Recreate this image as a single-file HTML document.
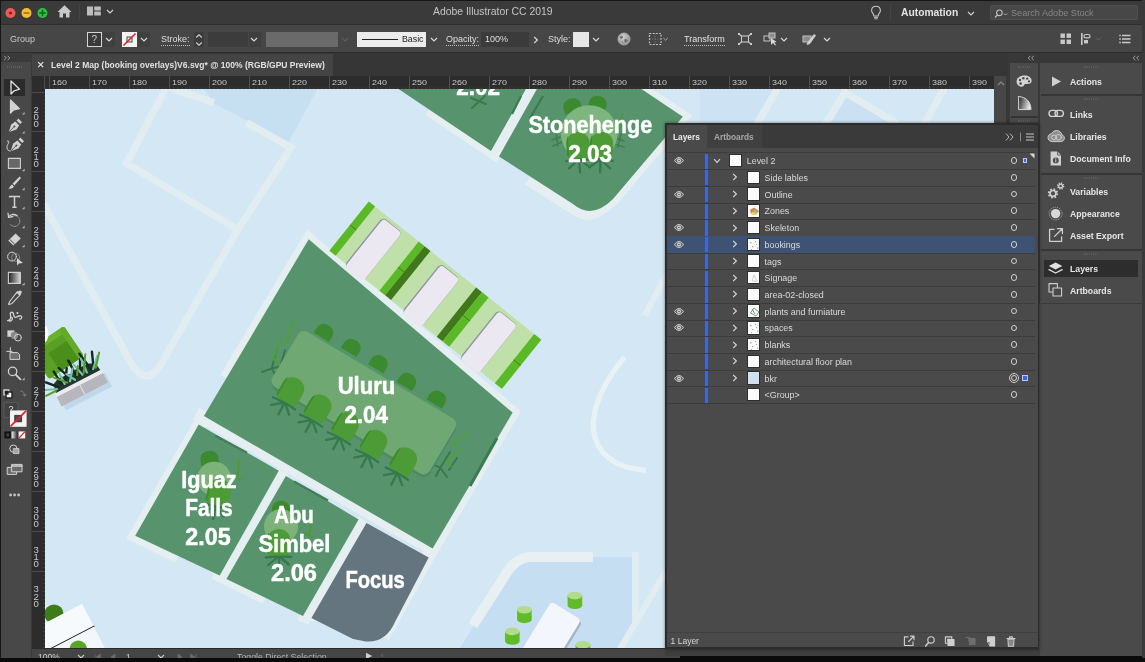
<!DOCTYPE html>
<html lang="en">
<head>
<meta charset="utf-8">
<title>Adobe Illustrator CC 2019</title>
<style>
*{box-sizing:border-box;margin:0;padding:0}
html,body{width:1145px;height:662px;overflow:hidden;background:#000}
body{position:relative;font-family:"Liberation Sans",sans-serif;font-size:9px;color:#dcdcdc;-webkit-font-smoothing:antialiased}
.abs{position:absolute}
#app{position:absolute;left:0;top:0;width:1145px;height:662px;overflow:hidden;background:#4a4a4a;will-change:transform}
#titlebar{left:0;top:0;width:1145px;height:25px;background:#3a3a3a;border-bottom:1px solid #2e2e2e;box-shadow:inset 0 1px 0 #161616}
#ctrlbar{left:0;top:25px;width:1145px;height:28px;background:#464646;border-bottom:1px solid #2c2c2c}
#tabstrip{left:32px;top:53px;width:976px;height:23px;background:#363636}
#tab{left:0;top:1px;width:301px;height:22px;background:#444444}
#toolbar{left:0;top:53px;width:32px;height:605px;background:#484848;border-right:1px solid #3a3a3a}
#toolhead{left:0;top:53px;width:32px;height:9px;background:#3a3a3a}
#hruler{left:32px;top:76px;width:962px;height:13px;background:#2c2c2c}
#vruler{left:32px;top:89px;width:13px;height:559px;background:#2c2c2c}
#canvas{left:45px;top:89px;width:949px;height:559px;background:#d3e7f4;overflow:hidden}
#vscroll{left:994px;top:76px;width:14px;height:572px;background:#474747;border-right:2px solid #383838}
#statusbar{left:32px;top:648px;width:976px;height:10px;background:#454545}
#bottomblack{left:0;top:658px;width:1145px;height:4px;background:#0a0a0a}
#dockbg{left:1008px;top:53px;width:137px;height:605px;background:#383838}
#dockicons{left:1010px;top:63px;width:28px;height:62px;background:#4a4a4a}
#dockwide{left:1040.4px;top:63px;width:104.6px;height:595px;background:#4a4a4a}
#dockfill{left:1008px;top:304px;width:137px;height:354px;background:#4a4a4a}
.t{position:absolute;white-space:nowrap;line-height:1}
.b{font-weight:bold}
svg{position:absolute;overflow:visible}
.rl{position:absolute;top:0;height:13px;font-size:8px;color:#c8c8c8;line-height:13px;padding-left:2.2px;border-left:1px solid #4e4e4e}
.rl b{display:inline-block;font-weight:normal;transform:scaleX(1.12);transform-origin:0 50%}
.vl{position:absolute;left:0;width:13px;border-top:1px solid #4e4e4e;font-size:8.3px;color:#c8c8c8;line-height:7.2px;text-align:center;padding-top:14.5px;padding-right:4.6px}
.vl i{display:block;font-style:normal;transform:scaleX(1.15)}
</style>
</head>
<body>
<div id="app">
<!-- TITLE BAR -->
<div id="titlebar" class="abs">
  <svg width="60" height="25" style="left:0;top:-0.3px">
    <circle cx="10.5" cy="13" r="5" fill="#ee5b55"/><circle cx="10.5" cy="13" r="1.6" fill="#8c1a14"/>
    <circle cx="26.5" cy="13" r="5" fill="#f5bd30"/><rect x="23.5" y="12.3" width="6" height="1.4" fill="#98660a"/>
    <circle cx="42.5" cy="13" r="5" fill="#2bc33f"/><rect x="39.3" y="12.3" width="6.4" height="1.4" fill="#0a6317"/><rect x="41.8" y="9.8" width="1.4" height="6.4" fill="#0a6317"/>
  </svg>
  <svg width="20" height="16" style="left:56px;top:4.4px" viewBox="0 0 20 16">
    <path d="M8.5 1.2 L1.5 8 L3.5 8 L3.5 13.6 L7 13.6 L7 9.6 L10 9.6 L10 13.6 L13.5 13.6 L13.5 8 L15.5 8 Z" fill="#c9c9c9"/>
  </svg>
  <div class="abs" style="left:79px;top:5px;width:1px;height:15px;background:#444"></div>
  <svg width="16" height="12" style="left:87px;top:6px" viewBox="0 0 16 12">
    <rect x="0" y="0.5" width="6" height="9" fill="#bdbdbd"/><rect x="7.2" y="0.5" width="6.6" height="4" fill="#bdbdbd"/><rect x="7.2" y="5.5" width="6.6" height="4" fill="#bdbdbd"/>
  </svg>
  <svg width="8" height="6" style="left:106px;top:9px" viewBox="0 0 8 6"><path d="M1 1 L4 4 L7 1" fill="none" stroke="#d0d0d0" stroke-width="1.2"/></svg>
  <div class="t" style="left:433px;top:7px;font-size:10.4px;color:#c4c4c4">Adobe Illustrator CC 2019</div>
  <!-- lightbulb -->
  <svg width="12" height="16" style="left:870px;top:4.8px" viewBox="0 0 12 16">
    <path d="M6 1.2 C3.2 1.2 1.6 3.2 1.6 5.4 C1.6 7.2 2.8 8.2 3.6 9.4 L3.8 11 L8.2 11 L8.4 9.4 C9.2 8.2 10.4 7.2 10.4 5.4 C10.4 3.2 8.8 1.2 6 1.2 Z" fill="none" stroke="#c4c4c4" stroke-width="1.1"/>
    <path d="M4 12.4 H8 M4.4 13.8 H7.6" stroke="#c4c4c4" stroke-width="1"/>
  </svg>
  <div class="abs" style="left:890px;top:4px;width:1px;height:17px;background:#444"></div>
  <div class="t b" style="left:901px;top:7.8px;font-size:10.3px;color:#e2e2e2">Automation</div>
  <svg width="8" height="6" style="left:967px;top:10.6px" viewBox="0 0 8 6"><path d="M1 1 L4 4 L7 1" fill="none" stroke="#d0d0d0" stroke-width="1.2"/></svg>
  <div class="abs" style="left:990.4px;top:5px;width:147.6px;height:15px;background:#474747;border:1px solid #505050;border-radius:2px"></div>
  <svg width="14" height="10" style="left:994px;top:8.6px" viewBox="0 0 14 10">
    <circle cx="5.4" cy="3.8" r="2.8" fill="none" stroke="#c0c0c0" stroke-width="1.1"/><path d="M3.3 6 L1 8.6" stroke="#c0c0c0" stroke-width="1.2"/><path d="M10 4.5 L11.5 6 L13 4.5" fill="none" stroke="#c0c0c0" stroke-width="0.9"/>
  </svg>
  <div class="t" style="left:1011px;top:8.8px;font-size:9.15px;color:#858585">Search Adobe Stock</div>
</div>

<!-- CONTROL BAR -->
<div id="ctrlbar" class="abs">
  <div class="abs" style="left:103px;top:7px;width:12px;height:15px;background:#404040"></div><div class="abs" style="left:138px;top:7px;width:12px;height:15px;background:#404040"></div>
  <div class="t" style="left:10px;top:10px;font-size:9px;color:#c9c9c9">Group</div>
  <div class="abs" style="left:87px;top:7px;width:15px;height:15px;border:1.5px solid #d6d6d6;background:#3a3a3a"></div>
  <div class="t" style="left:91.5px;top:9.5px;font-size:10px;color:#c9c9c9">?</div>
  <svg width="8" height="6" style="left:105px;top:12px" viewBox="0 0 8 6"><path d="M1 1 L4 4 L7 1" fill="none" stroke="#d8d8d8" stroke-width="1.2"/></svg>
  <div class="abs" style="left:122px;top:7px;width:15px;height:15px;background:#f4f4f4"></div>
  <svg width="15" height="15" style="left:122px;top:7px" viewBox="0 0 15 15"><rect x="5" y="5" width="5" height="5" fill="none" stroke="#444" stroke-width="1"/><path d="M1.5 13.5 L13.5 1.5" stroke="#e8202a" stroke-width="1.6"/></svg>
  <svg width="8" height="6" style="left:140px;top:12px" viewBox="0 0 8 6"><path d="M1 1 L4 4 L7 1" fill="none" stroke="#d8d8d8" stroke-width="1.2"/></svg>
  <div class="t" style="left:161px;top:10px;font-size:9px;color:#dedede;border-bottom:1px dotted #bdbdbd;padding-bottom:1px">Stroke:</div>
  <div class="abs" style="left:193.5px;top:7px;width:10.5px;height:15px;background:#3c3c3c"></div><div class="abs" style="left:208px;top:7px;width:39.5px;height:15px;background:#3c3c3c"></div><div class="abs" style="left:248.5px;top:7px;width:12.5px;height:15px;background:#3f3f3f"></div>
  <svg width="8" height="14" style="left:194.8px;top:7.6px" viewBox="0 0 8 14"><path d="M1.2 4.5 L4 1.8 L6.8 4.5 M1.2 9.5 L4 12.2 L6.8 9.5" fill="none" stroke="#d0d0d0" stroke-width="1.1"/></svg>
  <svg width="8" height="6" style="left:250px;top:12px" viewBox="0 0 8 6"><path d="M1 1 L4 4 L7 1" fill="none" stroke="#d8d8d8" stroke-width="1.2"/></svg>
  <div class="abs" style="left:266px;top:7px;width:72px;height:15px;background:#6a6a6a"></div>
  <svg width="8" height="6" style="left:341px;top:12px" viewBox="0 0 8 6"><path d="M1 1 L4 4 L7 1" fill="none" stroke="#5c5c5c" stroke-width="1.2"/></svg>
  <div class="abs" style="left:357px;top:7px;width:69px;height:15px;background:#ececec"></div>
  <div class="abs" style="left:362px;top:14px;width:36px;height:1.4px;background:#222"></div>
  <div class="t" style="left:402px;top:10px;font-size:8.8px;color:#222">Basic</div>
  <svg width="8" height="6" style="left:430px;top:12px" viewBox="0 0 8 6"><path d="M1 1 L4 4 L7 1" fill="none" stroke="#d8d8d8" stroke-width="1.2"/></svg>
  <div class="t" style="left:446px;top:10px;font-size:9px;color:#dedede;border-bottom:1px dotted #bdbdbd;padding-bottom:1px">Opacity:</div>
  <div class="abs" style="left:481px;top:7px;width:48px;height:15px;background:#3b3b3b"></div>
  <div class="t" style="left:485px;top:10px;font-size:9px;color:#dedede">100%</div>
  <svg width="6" height="8" style="left:533px;top:11px" viewBox="0 0 6 8"><path d="M1.2 1 L4.4 4 L1.2 7" fill="none" stroke="#d8d8d8" stroke-width="1.2"/></svg>
  <div class="t" style="left:548px;top:10px;font-size:9px;color:#dedede">Style:</div>
  <div class="abs" style="left:573px;top:7px;width:16px;height:15px;background:#e6e6e6"></div>
  <svg width="8" height="6" style="left:592px;top:12px" viewBox="0 0 8 6"><path d="M1 1 L4 4 L7 1" fill="none" stroke="#d8d8d8" stroke-width="1.2"/></svg>
  <!-- globe -->
  <svg width="14" height="14" style="left:617px;top:7px" viewBox="0 0 14 14">
    <defs><radialGradient id="gl" cx="0.4" cy="0.35" r="0.7"><stop offset="0" stop-color="#d6d6d6"/><stop offset="1" stop-color="#8a8a8a"/></radialGradient></defs><circle cx="7" cy="7" r="6" fill="url(#gl)" stroke="#b8b8b8" stroke-width="0.8"/><path d="M3 4.4 Q5 3.4 6 5 Q5.4 7 3.6 6.4 Z M7.6 7.4 Q10 6.6 10.6 8.6 Q9.4 10.6 7.6 9.8 Z M5 9 L6 10.6" fill="#6e6e6e" stroke="#6e6e6e" stroke-width="0.5"/>
  </svg>
  <!-- align dotted -->
  <svg width="22" height="14" style="left:648px;top:7px" viewBox="0 0 22 14">
    <rect x="1.5" y="1.5" width="11.5" height="11" fill="none" stroke="#c4c4c4" stroke-width="1.2" stroke-dasharray="1.8 1.4"/><path d="M7.2 1.5 V12.5 M1.5 7 H13" stroke="#9a9a9a" stroke-width="0.7" stroke-dasharray="1 1.6"/><path d="M15.4 6 L17.6 8.2 L19.8 6" fill="none" stroke="#aaa" stroke-width="1"/>
  </svg>
  <div class="t" style="left:684px;top:10px;font-size:9px;color:#e2e2e2;border-bottom:1px dotted #bdbdbd;padding-bottom:1px">Transform</div>
  <svg width="14" height="12" style="left:738px;top:8px" viewBox="0 0 14 12">
    <rect x="3.5" y="3" width="7" height="6" fill="none" stroke="#c9c9c9" stroke-width="1.1"/><path d="M1 1 L3.5 3 M13 1 L10.5 3 M1 11 L3.5 9 M13 11 L10.5 9" stroke="#c9c9c9" stroke-width="1.2"/><rect x="0" y="0" width="2" height="2" fill="#c9c9c9"/><rect x="12" y="0" width="2" height="2" fill="#c9c9c9"/><rect x="0" y="10" width="2" height="2" fill="#c9c9c9"/><rect x="12" y="10" width="2" height="2" fill="#c9c9c9"/>
  </svg>
  <svg width="16" height="14" style="left:763px;top:7px" viewBox="0 0 16 14">
    <rect x="1" y="4" width="6" height="5" fill="none" stroke="#c4c4c4" stroke-width="1"/><rect x="6" y="1" width="6" height="5" fill="#8a8a8a" stroke="#c4c4c4" stroke-width="1"/><path d="M8 6 L8 13 L10 11 L12 13.5 L13 12.8 L11.2 10.4 L13.6 10 Z" fill="#d8d8d8"/>
  </svg>
  <svg width="8" height="6" style="left:780px;top:12px" viewBox="0 0 8 6"><path d="M1 1 L4 4 L7 1" fill="none" stroke="#d8d8d8" stroke-width="1.2"/></svg>
  <svg width="16" height="14" style="left:802px;top:7px" viewBox="0 0 16 14">
    <rect x="1" y="4" width="8" height="6" fill="#8a8a8a" stroke="#c4c4c4" stroke-width="1"/><path d="M5 11 L12 2 L14 3.6 L7.5 12.2 L4.6 13 Z" fill="#d0d0d0"/>
  </svg>
  <svg width="8" height="6" style="left:823px;top:12px" viewBox="0 0 8 6"><path d="M1 1 L4 4 L7 1" fill="none" stroke="#d8d8d8" stroke-width="1.2"/></svg>
  <!-- right icons -->
  <svg width="12" height="12" style="left:1060px;top:8px" viewBox="0 0 12 12"><rect x="0.5" y="0.5" width="4.4" height="4.4" fill="#c9c9c9"/><rect x="6.6" y="0.5" width="4.4" height="4.4" fill="#c9c9c9"/><rect x="0.5" y="6.6" width="4.4" height="4.4" fill="#c9c9c9"/><rect x="6.6" y="6.6" width="4.4" height="4.4" fill="#c9c9c9"/></svg>
  <svg width="24" height="12" style="left:1080px;top:8px" viewBox="0 0 24 12"><rect x="1" y="0" width="1.6" height="12" fill="#c9c9c9"/><rect x="4" y="1.5" width="6" height="3.4" fill="none" stroke="#c9c9c9" stroke-width="1.2" rx="1.7"/><rect x="4" y="7" width="4" height="3.4" fill="#c9c9c9"/><path d="M16 4.5 L18.5 7 L21 4.5" fill="none" stroke="#666" stroke-width="1"/></svg>
  <svg width="12" height="10" style="left:1119px;top:9px" viewBox="0 0 12 10"><path d="M3 1.5 H11.5 M3 5 H11.5 M3 8.5 H11.5" stroke="#c9c9c9" stroke-width="1.3"/><path d="M0.3 1.5 H1.8 M0.3 5 H1.8 M0.3 8.5 H1.8" stroke="#c9c9c9" stroke-width="1.3"/></svg>
</div>

<!-- TAB STRIP -->
<div id="tabstrip" class="abs">
  <div id="tab" class="abs">
    <svg width="8" height="8" style="left:5px;top:7px" viewBox="0 0 8 8"><path d="M1.2 1.2 L6.2 6.2 M6.2 1.2 L1.2 6.2" stroke="#e8e8e8" stroke-width="1.2"/></svg>
    <div class="t b" style="left:19px;top:6.5px;font-size:8.5px;color:#e0e0e0">Level 2 Map (booking overlays)V6.svg* @ 100% (RGB/GPU Preview)</div>
  </div>
</div>
<!-- TOOLBAR -->
<div id="toolbar" class="abs"></div><div id="toolhead" class="abs"></div>
<svg width="8" height="6" style="left:3px;top:55.4px" viewBox="0 0 8 6"><path d="M1.2 0.8 L3.4 3 L1.2 5.2 M4.6 0.8 L6.8 3 L4.6 5.2" fill="none" stroke="#b0b0b0" stroke-width="0.9"/></svg>
<div class="abs" style="left:7px;top:65.6px;width:15px;height:2px;border-top:1px dotted #5e5e5e;border-bottom:1px dotted #5e5e5e"></div>
<div class="abs" style="left:0;top:0;width:1.2px;height:658px;background:#161616;z-index:5"></div>
<div id="hruler" class="abs">
<div class="abs" style="left:0;top:0;width:13px;height:13px;background:#2c2c2c;border-right:1px solid #4a4a4a"></div>
<div class="rl" style="left:17.3px"><b>160</b></div>
<div class="rl" style="left:57.3px"><b>170</b></div>
<div class="rl" style="left:97.3px"><b>180</b></div>
<div class="rl" style="left:137.3px"><b>190</b></div>
<div class="rl" style="left:177.3px"><b>200</b></div>
<div class="rl" style="left:217.3px"><b>210</b></div>
<div class="rl" style="left:257.3px"><b>220</b></div>
<div class="rl" style="left:297.3px"><b>230</b></div>
<div class="rl" style="left:337.3px"><b>240</b></div>
<div class="rl" style="left:377.3px"><b>250</b></div>
<div class="rl" style="left:417.3px"><b>260</b></div>
<div class="rl" style="left:457.3px"><b>270</b></div>
<div class="rl" style="left:497.3px"><b>280</b></div>
<div class="rl" style="left:537.3px"><b>290</b></div>
<div class="rl" style="left:577.3px"><b>300</b></div>
<div class="rl" style="left:617.3px"><b>310</b></div>
<div class="rl" style="left:657.3px"><b>320</b></div>
<div class="rl" style="left:697.3px"><b>330</b></div>
<div class="rl" style="left:737.3px"><b>340</b></div>
<div class="rl" style="left:777.3px"><b>350</b></div>
<div class="rl" style="left:817.3px"><b>360</b></div>
<div class="rl" style="left:857.3px"><b>370</b></div>
<div class="rl" style="left:897.3px"><b>380</b></div>
<div class="rl" style="left:937.3px"><b>390</b></div>
<svg width="962" height="13" style="left:0;top:0"><path d="M13.8 11.4 V13 M21.8 11.4 V13 M25.8 11.4 V13 M29.8 11.4 V13 M33.8 11.4 V13 M37.8 10.4 V13 M41.8 11.4 V13 M45.8 11.4 V13 M49.8 11.4 V13 M53.8 11.4 V13 M61.8 11.4 V13 M65.8 11.4 V13 M69.8 11.4 V13 M73.8 11.4 V13 M77.8 10.4 V13 M81.8 11.4 V13 M85.8 11.4 V13 M89.8 11.4 V13 M93.8 11.4 V13 M101.8 11.4 V13 M105.8 11.4 V13 M109.8 11.4 V13 M113.8 11.4 V13 M117.8 10.4 V13 M121.8 11.4 V13 M125.8 11.4 V13 M129.8 11.4 V13 M133.8 11.4 V13 M141.8 11.4 V13 M145.8 11.4 V13 M149.8 11.4 V13 M153.8 11.4 V13 M157.8 10.4 V13 M161.8 11.4 V13 M165.8 11.4 V13 M169.8 11.4 V13 M173.8 11.4 V13 M181.8 11.4 V13 M185.8 11.4 V13 M189.8 11.4 V13 M193.8 11.4 V13 M197.8 10.4 V13 M201.8 11.4 V13 M205.8 11.4 V13 M209.8 11.4 V13 M213.8 11.4 V13 M221.8 11.4 V13 M225.8 11.4 V13 M229.8 11.4 V13 M233.8 11.4 V13 M237.8 10.4 V13 M241.8 11.4 V13 M245.8 11.4 V13 M249.8 11.4 V13 M253.8 11.4 V13 M261.8 11.4 V13 M265.8 11.4 V13 M269.8 11.4 V13 M273.8 11.4 V13 M277.8 10.4 V13 M281.8 11.4 V13 M285.8 11.4 V13 M289.8 11.4 V13 M293.8 11.4 V13 M301.8 11.4 V13 M305.8 11.4 V13 M309.8 11.4 V13 M313.8 11.4 V13 M317.8 10.4 V13 M321.8 11.4 V13 M325.8 11.4 V13 M329.8 11.4 V13 M333.8 11.4 V13 M341.8 11.4 V13 M345.8 11.4 V13 M349.8 11.4 V13 M353.8 11.4 V13 M357.8 10.4 V13 M361.8 11.4 V13 M365.8 11.4 V13 M369.8 11.4 V13 M373.8 11.4 V13 M381.8 11.4 V13 M385.8 11.4 V13 M389.8 11.4 V13 M393.8 11.4 V13 M397.8 10.4 V13 M401.8 11.4 V13 M405.8 11.4 V13 M409.8 11.4 V13 M413.8 11.4 V13 M421.8 11.4 V13 M425.8 11.4 V13 M429.8 11.4 V13 M433.8 11.4 V13 M437.8 10.4 V13 M441.8 11.4 V13 M445.8 11.4 V13 M449.8 11.4 V13 M453.8 11.4 V13 M461.8 11.4 V13 M465.8 11.4 V13 M469.8 11.4 V13 M473.8 11.4 V13 M477.8 10.4 V13 M481.8 11.4 V13 M485.8 11.4 V13 M489.8 11.4 V13 M493.8 11.4 V13 M501.8 11.4 V13 M505.8 11.4 V13 M509.8 11.4 V13 M513.8 11.4 V13 M517.8 10.4 V13 M521.8 11.4 V13 M525.8 11.4 V13 M529.8 11.4 V13 M533.8 11.4 V13 M541.8 11.4 V13 M545.8 11.4 V13 M549.8 11.4 V13 M553.8 11.4 V13 M557.8 10.4 V13 M561.8 11.4 V13 M565.8 11.4 V13 M569.8 11.4 V13 M573.8 11.4 V13 M581.8 11.4 V13 M585.8 11.4 V13 M589.8 11.4 V13 M593.8 11.4 V13 M597.8 10.4 V13 M601.8 11.4 V13 M605.8 11.4 V13 M609.8 11.4 V13 M613.8 11.4 V13 M621.8 11.4 V13 M625.8 11.4 V13 M629.8 11.4 V13 M633.8 11.4 V13 M637.8 10.4 V13 M641.8 11.4 V13 M645.8 11.4 V13 M649.8 11.4 V13 M653.8 11.4 V13 M661.8 11.4 V13 M665.8 11.4 V13 M669.8 11.4 V13 M673.8 11.4 V13 M677.8 10.4 V13 M681.8 11.4 V13 M685.8 11.4 V13 M689.8 11.4 V13 M693.8 11.4 V13 M701.8 11.4 V13 M705.8 11.4 V13 M709.8 11.4 V13 M713.8 11.4 V13 M717.8 10.4 V13 M721.8 11.4 V13 M725.8 11.4 V13 M729.8 11.4 V13 M733.8 11.4 V13 M741.8 11.4 V13 M745.8 11.4 V13 M749.8 11.4 V13 M753.8 11.4 V13 M757.8 10.4 V13 M761.8 11.4 V13 M765.8 11.4 V13 M769.8 11.4 V13 M773.8 11.4 V13 M781.8 11.4 V13 M785.8 11.4 V13 M789.8 11.4 V13 M793.8 11.4 V13 M797.8 10.4 V13 M801.8 11.4 V13 M805.8 11.4 V13 M809.8 11.4 V13 M813.8 11.4 V13 M821.8 11.4 V13 M825.8 11.4 V13 M829.8 11.4 V13 M833.8 11.4 V13 M837.8 10.4 V13 M841.8 11.4 V13 M845.8 11.4 V13 M849.8 11.4 V13 M853.8 11.4 V13 M861.8 11.4 V13 M865.8 11.4 V13 M869.8 11.4 V13 M873.8 11.4 V13 M877.8 10.4 V13 M881.8 11.4 V13 M885.8 11.4 V13 M889.8 11.4 V13 M893.8 11.4 V13 M901.8 11.4 V13 M905.8 11.4 V13 M909.8 11.4 V13 M913.8 11.4 V13 M917.8 10.4 V13 M921.8 11.4 V13 M925.8 11.4 V13 M929.8 11.4 V13 M933.8 11.4 V13 M941.8 11.4 V13 M945.8 11.4 V13 M949.8 11.4 V13 M953.8 11.4 V13 M957.8 10.4 V13 " stroke="#4c4c4c" stroke-width="0.8" fill="none"/></svg>
</div>
<div id="vruler" class="abs">
<div class="vl" style="top:2.5px;height:40px"><i>2</i><i>0</i><i>0</i></div>
<div class="vl" style="top:42.4px;height:40px"><i>2</i><i>1</i><i>0</i></div>
<div class="vl" style="top:82.4px;height:40px"><i>2</i><i>2</i><i>0</i></div>
<div class="vl" style="top:122.4px;height:40px"><i>2</i><i>3</i><i>0</i></div>
<div class="vl" style="top:162.3px;height:40px"><i>2</i><i>4</i><i>0</i></div>
<div class="vl" style="top:202.2px;height:40px"><i>2</i><i>5</i><i>0</i></div>
<div class="vl" style="top:242.2px;height:40px"><i>2</i><i>6</i><i>0</i></div>
<div class="vl" style="top:282.2px;height:40px"><i>2</i><i>7</i><i>0</i></div>
<div class="vl" style="top:322.1px;height:40px"><i>2</i><i>8</i><i>0</i></div>
<div class="vl" style="top:362.1px;height:40px"><i>2</i><i>9</i><i>0</i></div>
<div class="vl" style="top:402.0px;height:40px"><i>3</i><i>0</i><i>0</i></div>
<div class="vl" style="top:442.0px;height:40px"><i>3</i><i>1</i><i>0</i></div>
<div class="vl" style="top:481.9px;height:40px"><i>3</i><i>2</i><i>0</i></div>
<svg width="13" height="559" style="left:0;top:0"><path d="M11.4 7.0 H13 M11.4 11.0 H13 M11.4 15.0 H13 M11.4 19.0 H13 M10.4 23.0 H13 M11.4 27.0 H13 M11.4 31.0 H13 M11.4 35.0 H13 M11.4 39.0 H13 M11.4 46.9 H13 M11.4 50.9 H13 M11.4 54.9 H13 M11.4 58.9 H13 M10.4 62.9 H13 M11.4 66.9 H13 M11.4 70.9 H13 M11.4 74.9 H13 M11.4 78.9 H13 M11.4 86.9 H13 M11.4 90.9 H13 M11.4 94.9 H13 M11.4 98.9 H13 M10.4 102.9 H13 M11.4 106.9 H13 M11.4 110.9 H13 M11.4 114.9 H13 M11.4 118.9 H13 M11.4 126.8 H13 M11.4 130.8 H13 M11.4 134.8 H13 M11.4 138.8 H13 M10.4 142.8 H13 M11.4 146.8 H13 M11.4 150.8 H13 M11.4 154.8 H13 M11.4 158.8 H13 M11.4 166.8 H13 M11.4 170.8 H13 M11.4 174.8 H13 M11.4 178.8 H13 M10.4 182.8 H13 M11.4 186.8 H13 M11.4 190.8 H13 M11.4 194.8 H13 M11.4 198.8 H13 M11.4 206.7 H13 M11.4 210.7 H13 M11.4 214.7 H13 M11.4 218.7 H13 M10.4 222.7 H13 M11.4 226.7 H13 M11.4 230.7 H13 M11.4 234.7 H13 M11.4 238.7 H13 M11.4 246.7 H13 M11.4 250.7 H13 M11.4 254.7 H13 M11.4 258.7 H13 M10.4 262.7 H13 M11.4 266.7 H13 M11.4 270.7 H13 M11.4 274.7 H13 M11.4 278.7 H13 M11.4 286.6 H13 M11.4 290.6 H13 M11.4 294.6 H13 M11.4 298.6 H13 M10.4 302.6 H13 M11.4 306.6 H13 M11.4 310.6 H13 M11.4 314.6 H13 M11.4 318.6 H13 M11.4 326.6 H13 M11.4 330.6 H13 M11.4 334.6 H13 M11.4 338.6 H13 M10.4 342.6 H13 M11.4 346.6 H13 M11.4 350.6 H13 M11.4 354.6 H13 M11.4 358.6 H13 M11.4 366.5 H13 M11.4 370.5 H13 M11.4 374.5 H13 M11.4 378.5 H13 M10.4 382.5 H13 M11.4 386.5 H13 M11.4 390.5 H13 M11.4 394.5 H13 M11.4 398.5 H13 M11.4 406.5 H13 M11.4 410.5 H13 M11.4 414.5 H13 M11.4 418.5 H13 M10.4 422.5 H13 M11.4 426.5 H13 M11.4 430.5 H13 M11.4 434.5 H13 M11.4 438.5 H13 M11.4 446.4 H13 M11.4 450.4 H13 M11.4 454.4 H13 M11.4 458.4 H13 M10.4 462.4 H13 M11.4 466.4 H13 M11.4 470.4 H13 M11.4 474.4 H13 M11.4 478.4 H13 M11.4 486.4 H13 M11.4 490.4 H13 M11.4 494.4 H13 M11.4 498.4 H13 M10.4 502.4 H13 M11.4 506.4 H13 M11.4 510.4 H13 M11.4 514.4 H13 M11.4 518.4 H13 M11.4 526.3 H13 M11.4 530.3 H13 M11.4 534.3 H13 M11.4 538.3 H13 M10.4 542.3 H13 M11.4 546.3 H13 M11.4 550.3 H13 M11.4 554.3 H13 M11.4 558.3 H13 " stroke="#4c4c4c" stroke-width="0.8" fill="none"/></svg>
</div>
<div id="vscroll" class="abs"><svg width="8" height="6" style="left:3px;top:4px" viewBox="0 0 8 6"><path d="M1 5 L4 2 L7 5" fill="none" stroke="#8a8a8a" stroke-width="1.1"/></svg></div>
<div id="statusbar" class="abs">
<div class="abs" style="left:0;top:0;width:976px;height:1px;background:#2a2a2a"></div>
<div class="t" style="left:6px;top:4.6px;font-size:8.5px;color:#d0d0d0">100%</div>
<svg width="8" height="6" style="left:45px;top:6.4px" viewBox="0 0 8 6"><path d="M1 1 L4 4 L7 1" fill="none" stroke="#d0d0d0" stroke-width="1.1"/></svg>
<svg width="30" height="8" style="left:62px;top:5px" viewBox="0 0 30 8"><path d="M1 1 V7 M6.4 1 L2.4 4 L6.4 7 Z M21 1 L17 4 L21 7 Z" fill="#6c6c6c" stroke="#6c6c6c" stroke-width="0.8"/></svg>
<div class="t" style="left:94px;top:4.6px;font-size:8.5px;color:#d0d0d0">1</div>
<svg width="8" height="6" style="left:124.6px;top:6.4px" viewBox="0 0 8 6"><path d="M1 1 L4 4 L7 1" fill="none" stroke="#d0d0d0" stroke-width="1.1"/></svg>
<svg width="30" height="8" style="left:143px;top:5px" viewBox="0 0 30 8"><path d="M3 1 L7 4 L3 7 Z M15.6 1 L19.6 4 L15.6 7 Z M21 1 V7" fill="#6c6c6c" stroke="#6c6c6c" stroke-width="0.8"/></svg>
<div class="t" style="left:205px;top:4.6px;font-size:8.77px;color:#b4b4b4">Toggle Direct Selection</div>
<div class="t" style="left:334px;top:4.2px;font-size:8px;color:#d0d0d0">&#9654;</div>
<div class="t" style="left:349px;top:3.6px;font-size:8px;color:#777">&#8249;</div>
</div>
<div id="bottomblack" class="abs"></div>
<!-- CANVAS / MAP -->
<div id="canvas" class="abs">
<svg width="949" height="559" style="left:0;top:0" viewBox="45 89 949 559">
  <defs>
    <g id="chair">
      <path d="M0 12 L-10.5 21 M0 12 L10 20.5 M0 12 L0.5 25.5 M0 12 L-13 13.5 M0 12 L12.5 13" stroke="#37784c" stroke-width="2.3" stroke-linecap="round" fill="none"/>
      <path d="M-11.6 7 V-3.5 C-11.6 -19 11.6 -19 11.6 -3.5 V7 C11.6 9.8 9.6 11.4 7.2 11.4 H-7.2 C-9.6 11.4 -11.6 9.8 -11.6 7 Z" fill="#4c9b36"/>
      <path d="M-11.6 7 V-3.5 C-11.6 -7 -11 -9.6 -9.8 -11.6 V9.6 C-11 9 -11.6 8.2 -11.6 7 Z" fill="#3e8a2c"/>
    </g>
    <g id="bchair">
      <path d="M-9 4 V-2 C-9 -13 9 -13 9 -2 V4 Z" fill="#3b8a30"/>
    </g>
    <g id="stool">
      <path d="M-7.3 0 V9.6 A7.3 3.8 0 0 0 7.3 9.6 V0 Z" fill="#60bb28"/>
      <ellipse cx="0" cy="0" rx="7.3" ry="3.8" fill="#b2dc8c"/>
    </g>
  </defs>
  <rect x="45" y="89" width="949" height="559" fill="#d3e7f4"/>
  <!-- darker floor regions -->
  <path d="M204 89 H317.5 L288.5 142 L214 103.5 Z" fill="#c6dff1"/>
  <path d="M460 648 L505.8 574.4 Q515.5 557.5 531 557 H636 V628 L624 648 Z" fill="#c6def2"/>
  <path d="M757 123 L777.5 89 H700 V123 Z" fill="#cde3f3"/>
  <path d="M826 123 L845 92 L897 123 Z" fill="#cbe1f3"/>
  <!-- pale wall outlines -->
  <g fill="none" stroke="#e2edf1" stroke-width="7.2" stroke-linejoin="miter" stroke-linecap="butt">
    <path d="M166.5 87 L126.5 163.5 L237 229"/>
    <path d="M164 85.5 L214 102.6"/>
    <path d="M246.5 122.5 L291 147.5 L237 231 L160.5 365 Q147.5 386 133 366.5 L43 203"/>
    <path d="M778.5 87 L757 124"/>
    <path d="M825 125 L845 92.5 L898 124"/>
    <path d="M945 87 L924 124"/>
    <path d="M667 273.5 L644.7 315.5" stroke-width="6"/>
    <path d="M624.5 357 Q591 398 593.5 430 Q598 466 646 470.5" stroke-width="5.4" stroke="#e8f1f3"/>
    <path d="M472.9 625.5 L505.8 574.4 Q515.5 557.5 531 557 H592.9" stroke-width="10" stroke="#e8f0f3"/>
    <path d="M635.4 552.3 V626" stroke-width="6.8"/>
    <path d="M666 571 L619 651" stroke-width="6.4"/>
        <path d="M40 600 L60 635"/>
  </g>
  <!-- room walls (thick, half hidden by room fills) -->
  <g fill="none" stroke="#e5eef0" stroke-width="13" stroke-linejoin="miter" stroke-linecap="butt">
    <!-- Uluru -->
    <path d="M226 378 L308.7 239.3 L512.6 412.6 L432.6 548.5 L383 637"/>
    <path d="M196 413.5 L432.6 549"/>
    <!-- Iguaz -->
    <path d="M203 418 L135.2 535.7 L178 556.6"/>
    <path d="M214 573 L226.4 579 L265.5 598"/>
    <path d="M282.5 471 L223 577.5"/>
    <path d="M300 614.5 L311 619"/>
    <path d="M363.5 520 L307 619"/>
    <!-- room 2.02 / Stonehenge -->
    <path d="M384 78 L394 85"/>
    <path d="M536 80 L496 153.8" stroke-width="14"/>
    <path d="M429 109.5 L500 157.2"/>
    <path d="M528.5 179 L577 210 Q590.5 218 602 207.5 L613 199 L682.8 116.7 L630 82"/>
  </g>
  <!-- rooms -->
  <g fill="#57946e">
    <path d="M308.7 239.3 L512.6 412.6 L432.6 548.5 L203.9 416 Z"/>
    <path d="M198.7 424.6 L278.8 470.8 L219.7 575.4 L135.2 535.7 Z"/>
    <path d="M285.9 475.9 L358.6 519.5 L303 616 L226.4 579 Z"/>
    <path d="M380 80 L398.5 89 L491 151 L531 80 Z"/>
    <path d="M542 80 H628 L682.8 116.7 L613 199 Q592 220 573 204 L499 156.4 Z"/>
  </g>
  <!-- Focus -->
  <path d="M366.5 523 L428.7 557.6 L395.5 621 Q386 643 366 641.5 L353 639 L311.4 618 Z" fill="#65757f"/>
  <!-- booth row -->
  <g transform="translate(368.8 201.5) rotate(38.7)">
    <rect x="0" y="0" width="221" height="63" fill="#bfe0a8"/>
    <rect x="0" y="0" width="8" height="63" fill="#5bb827"/>
    <rect x="64" y="0" width="7.5" height="63" fill="#5bb827"/><rect x="71.5" y="0" width="7.5" height="63" fill="#41781b"/>
    <rect x="137.5" y="0" width="7.5" height="63" fill="#41781b"/><rect x="145" y="0" width="8.5" height="63" fill="#5bb827"/>
    <rect x="212" y="0" width="9" height="63" fill="#5bb827"/>
    <g fill="#8e95a2">
      <rect x="20.6" y="3.4" width="25" height="62" rx="4.5"/>
      <rect x="94.6" y="3.4" width="25" height="62" rx="4.5"/>
      <rect x="168.6" y="3.4" width="25" height="62" rx="4.5"/>
    </g>
    <g fill="#ece8f1">
      <rect x="22" y="4" width="23.5" height="62" rx="4"/>
      <rect x="96" y="4" width="23.5" height="62" rx="4"/>
      <rect x="170" y="4" width="23.5" height="62" rx="4"/>
    </g>
    <path d="M0 30 H8 M64 33 H71.5 M145 30 H153.5 M212 33 H221" stroke="#2f6a1a" stroke-width="0.7"/>
  </g>
  <!-- Uluru furniture -->
  <g>
    <use href="#bchair" transform="translate(323.4 334) rotate(31)"/>
    <use href="#bchair" transform="translate(350.6 349) rotate(31)"/>
    <use href="#bchair" transform="translate(377.8 365.4) rotate(31)"/>
    <use href="#bchair" transform="translate(406.3 383) rotate(31)"/>
    <use href="#bchair" transform="translate(436.2 400.7) rotate(31)"/>
    <!-- end chairs (side view) -->
    <g fill="none" stroke-linecap="round">
      <path d="M277 348 L271.7 368.5 M285 350 L281 364 M271.7 368.5 L262 372 M271.7 368.5 L282 366 M271.7 368.5 L276 376" stroke="#37784c" stroke-width="1.9"/>
      <path d="M293 322.2 L286.7 340 M280 340 L273 359 M286 341 L291 344 M273.5 359.5 L279 362" stroke="#4fa03c" stroke-width="2.2"/>
      <path d="M450 452 L440.3 467.7 M457 458 L449 470 M440.3 467.7 L432 464 M440.3 467.7 L447 477 M440.3 467.7 L436 476" stroke="#37784c" stroke-width="1.9"/>
      <path d="M467.5 433.7 L454 443.2 M460.7 450 L447 461 M454 443.5 L457 448 M447 461.5 L450.5 466" stroke="#4fa03c" stroke-width="2.2"/>
    </g>
    <g transform="translate(301.5 328.5) rotate(30.7)">
      <rect x="1.5" y="2.5" width="183" height="64" rx="7" fill="#4d8a63"/>
      <rect x="0" y="0" width="183" height="64" rx="7" fill="#6fa873"/>
    </g>
    <use href="#chair" transform="translate(290.8 392) rotate(30)"/>
    <use href="#chair" transform="translate(318 409.4) rotate(30)"/>
    <use href="#chair" transform="translate(345.6 427) rotate(30)"/>
    <use href="#chair" transform="translate(373.8 444.6) rotate(30)"/>
    <use href="#chair" transform="translate(403.6 462.3) rotate(30)"/>
    <!-- sideboard shadows -->
    <path d="M497 438 L470 486" stroke="#3c7a52" stroke-width="3"/>
  </g>
  <!-- Stonehenge furniture -->
  <g>
    <use href="#bchair" transform="translate(572.9 108.5) rotate(-16)"/>
    <use href="#bchair" transform="translate(597.3 106) rotate(12)"/>
    <g stroke="#3f7e4e" stroke-width="1.6" fill="none" stroke-linecap="round">
      <path d="M552 140 L560 137 M556 133 L558 146 M553 146 L562 142"/>
      <path d="M616 138 L624 141 M621 134 L618 147 M614 144 L624 147"/>
    </g>
    <path d="M551 118 L553 130 M622 114 L619 128" stroke="#4c9b36" stroke-width="1.8" fill="none" stroke-linecap="round"/>
    <circle cx="589.2" cy="133.5" r="28.3" fill="#7fb57e"/>
    <use href="#chair" transform="translate(578.3 147) rotate(-3)"/>
    <use href="#chair" transform="translate(601.4 147) rotate(4)"/>
    <path d="M543 96 L530 118" stroke="#3c7a52" stroke-width="2.4"/>
    <path d="M521 96 L512 114" stroke="#3c7a52" stroke-width="2.2"/>
    <path d="M471 98 L486 104 M485 96 L472 108" stroke="#3a7a4c" stroke-width="2" fill="none" stroke-linecap="round"/>
  </g>
  <!-- Iguaz furniture -->
  <g>
    <use href="#bchair" transform="translate(209.7 461) rotate(-8)"/>
    <path d="M239 461 L237.4 478 M233 476 L241 480" stroke="#4c9b36" stroke-width="2.4" fill="none" stroke-linecap="round"/>
    <circle cx="214.2" cy="478.7" r="17" fill="#7db37b"/>
    <use href="#chair" transform="translate(218.7 494) rotate(14)"/>
    <path d="M215.3 435.7 L247 452.7" stroke="#437f56" stroke-width="2.4"/>
  </g>
  <!-- Abu Simbel furniture -->
  <g>
    <use href="#bchair" transform="translate(281 511) rotate(0)"/>
    <path d="M311 520 L309.4 535 M304 533 L312 537" stroke="#4c9b36" stroke-width="2.4" fill="none" stroke-linecap="round"/>
    <circle cx="281" cy="526.3" r="17" fill="#7db37b"/>
    <use href="#chair" transform="translate(278.8 544) rotate(0)"/>
    <path d="M294 481.5 L328 500.5" stroke="#437f56" stroke-width="2.4"/>
  </g>
  <!-- armchair + planter (left) -->
  <g transform="translate(63.8 326.1) rotate(-34)">
    <rect x="-42" y="0" width="42" height="36" rx="3" fill="#5aa024"/>
    <rect x="-42" y="0" width="42" height="6" rx="3" fill="#68b22c"/>
    <rect x="-6" y="0" width="6" height="36" rx="3" fill="#63ab29"/>
    <rect x="-28" y="14" width="22" height="22" fill="#4a8f1c"/>
  </g>
  <g transform="translate(55 393.5) rotate(-27.4)">
    <rect x="2" y="5" width="52" height="15" fill="#bcd3e6" opacity="0.8"/>
    <rect x="0" y="0" width="52" height="4.4" fill="#ececf0"/>
    <rect x="0" y="4" width="52" height="10.6" fill="#b6b6bc"/>
    <path d="M26 0 V14.6" stroke="#e6e6ea" stroke-width="0.9"/>
    <path d="M1 0 L3 -9 L10 -12 L24 -10 L30 -12 L44 -11 L50 -8 L51 0 Z" fill="#25362f"/>
    <g stroke-linecap="round" fill="none">
      <path d="M6 -4 L-3 -14 M10 -5 L9 -20 M14 -5 L22 -17 M21 -5 L15 -21 M27 -5 L27 -23 M31 -5 L38 -19 M43 -5 L40 -24 M46 -5 L52 -20" stroke="#16271f" stroke-width="2.4"/>
      <path d="M4 -3 L-8 -8 M13 -4 L13 -15 M19 -4 L27 -14 M33 -4 L30 -17 M38 -4 L39 -19 M45 -4 L55 -14 M24 -3 L19 -12" stroke="#6fc3a8" stroke-width="2.2"/>
      <path d="M35 -5 L45 -21 M48 -4 L58 -16 M16 -4 L6 -15 M2 -2 L-9 -2 M28 -6 L33 -14" stroke="#5d9a2c" stroke-width="2"/>
    </g>
  </g>
  <ellipse cx="43.5" cy="334" rx="5" ry="9" fill="#fff"/>
  <!-- bottom-left table -->
  <circle cx="54" cy="614" r="9.6" fill="#3d7c19"/>
  <g transform="translate(82 604.1) rotate(-27.5)">
    <rect x="-72" y="0" width="72" height="72" fill="#f3f7fc"/>
    <rect x="-72" y="0" width="72" height="25" fill="#f7fafd"/>
    <path d="M1 25 H-62" stroke="#1a1a1a" stroke-width="0.9"/>
  </g>
  <circle cx="78.3" cy="649.3" r="8.8" fill="#5ba524"/>
  <!-- stools + small table bottom right -->
  <use href="#stool" transform="translate(574.9 595.6)"/>
  <use href="#stool" transform="translate(524.4 609.8)"/>
  <use href="#stool" transform="translate(512.3 631.4)"/>
  <use href="#stool" transform="translate(582.9 644.7)"/>
  <g transform="translate(551.3 601.5) rotate(31.4)">
    <rect x="2.4" y="1.6" width="35" height="64" rx="4" fill="#aab3c2"/>
    <rect x="0" y="0" width="35" height="64" rx="4" fill="#f3f6fc"/>
  </g>
  <!-- labels -->
  <g font-family="'Liberation Sans',sans-serif" font-weight="bold" font-size="22.7" fill="#ffffff" stroke="#ffffff" stroke-width="0.45" text-anchor="middle">
    <text transform="translate(478.2 95) scale(1 1.09)" textLength="43.8" lengthAdjust="spacingAndGlyphs">2.02</text>
    <text transform="translate(590.3 133) scale(1 1.09)" textLength="123.7" lengthAdjust="spacingAndGlyphs">Stonehenge</text>
    <text transform="translate(590.1 162) scale(1 1.09)" textLength="43.8" lengthAdjust="spacingAndGlyphs">2.03</text>
    <text transform="translate(366.4 393.5) scale(1 1.09)" textLength="57.5" lengthAdjust="spacingAndGlyphs">Uluru</text>
    <text transform="translate(366.2 422.5) scale(1 1.09)" textLength="43.6" lengthAdjust="spacingAndGlyphs">2.04</text>
    <text transform="translate(208.9 487.5) scale(1 1.09)" textLength="55.4" lengthAdjust="spacingAndGlyphs">Iguaz</text>
    <text transform="translate(208.9 516) scale(1 1.09)" textLength="47.5" lengthAdjust="spacingAndGlyphs">Falls</text>
    <text transform="translate(207.9 545) scale(1 1.09)" textLength="45.5" lengthAdjust="spacingAndGlyphs">2.05</text>
    <text transform="translate(294 522.5) scale(1 1.09)" textLength="39.6" lengthAdjust="spacingAndGlyphs">Abu</text>
    <text transform="translate(294.4 551.5) scale(1 1.09)" textLength="72" lengthAdjust="spacingAndGlyphs">Simbel</text>
    <text transform="translate(294 580.5) scale(1 1.09)" textLength="45.9" lengthAdjust="spacingAndGlyphs">2.06</text>
    <text transform="translate(375.1 587.5) scale(1 1.09)" textLength="59.4" lengthAdjust="spacingAndGlyphs">Focus</text>
  </g>
</svg>
</div>
<!-- TOOL ICONS -->
<svg width="32" height="604" style="left:0;top:54px" viewBox="0 54 32 604">
  <g fill="none" stroke="#d2d2d2" stroke-width="1.2" stroke-linejoin="round" stroke-linecap="round">
    <rect x="4" y="79" width="21" height="17" fill="#2b2b2b" stroke="none"/>
    <!-- selection -->
    <path d="M11 81 L11 94 L14.2 90.8 L19.6 89.2 Z" stroke="#e0e0e0" stroke-width="1.3"/>
    <!-- direct selection -->
    <path d="M10.5 100 L10.5 113.2 L13.8 109.8 L19.4 108.6 Z" fill="#d2d2d2"/>
    <!-- pen -->
    <path d="M9 131 L11.2 124.4 L15.4 121.6 L19.2 125.4 L16.4 129.6 L9.8 131.8 Z" fill="#d2d2d2" stroke="none"/>
    <path d="M16.6 120.4 L18.4 118.6 L22 122.2 L20.2 124 Z" fill="#d2d2d2" stroke="none"/>
    <path d="M9.4 131.4 L14 126.8" stroke="#484848" stroke-width="0.9"/><circle cx="14.4" cy="126.4" r="1" fill="#484848" stroke="none"/>
    <!-- curvature -->
    <path d="M11 150 L13.2 143.4 L17.4 140.6 L21.2 144.4 L18.4 148.6 L11.8 150.8 Z" fill="#d2d2d2" stroke="none"/>
    <path d="M18.6 139.4 L20.4 137.6 L24 141.2 L22.2 143 Z" fill="#d2d2d2" stroke="none"/>
    <path d="M11.4 150.4 L16 145.8" stroke="#484848" stroke-width="0.9"/><circle cx="16.4" cy="145.4" r="1" fill="#484848" stroke="none"/>
    <path d="M10.4 151 C6 151 6.4 146 8.4 143.4 C9.6 141.6 8.6 140.4 7.4 141" stroke-width="1"/>
    <!-- rectangle -->
    <rect x="8.4" y="158.4" width="12" height="10" fill="#686868" stroke="#cfcfcf" stroke-width="1.1"/>
    <!-- brush -->
    <path d="M19.6 176.6 L21 178 L14.4 185.4 L12.6 183.6 Z" fill="#d2d2d2" stroke="none"/>
    <path d="M12 184.4 L13.8 186.2 C13 188.6 10.6 189 8.4 188.4 C10 187.6 10 185.4 12 184.4 Z" fill="#d2d2d2" stroke="none"/>
    <!-- type -->
    <path d="M9.6 197.6 V196.4 H19.4 V197.6 M14.5 196.4 V207 M12.4 207.2 H16.6" stroke-width="1.5" stroke-linecap="butt"/>
    <!-- rotate -->
    <path d="M11.6 216.4 A5.4 5.4 0 1 1 10.4 224.6" stroke="#9a9a9a" stroke-width="1" stroke-dasharray="1.6 1"/>
    <path d="M9 216.4 A5.6 5.6 0 0 1 17 215.6" stroke-width="1.3"/>
    <path d="M8 213 L8.6 217.4 L12.8 216.6" stroke-width="1.2"/>
    <!-- eraser -->
    <path d="M15.6 233.4 L20.8 238.4 L13.4 245.4 L8.2 240.4 Z" fill="#d2d2d2" stroke="none"/>
    <path d="M9.6 239.2 L14.6 244.2" stroke="#484848" stroke-width="1"/>
    <!-- shape builder -->
    <circle cx="12" cy="256.6" r="4.4" stroke-width="1"/><circle cx="15.6" cy="257.4" r="4" stroke-width="0.8" stroke="#9a9a9a"/>
    <path d="M17 258 L17 265.4 L19 263.4 L23 263 Z" fill="#d2d2d2" stroke="none"/>
    <!-- gradient -->
    <rect x="8.4" y="272.4" width="12" height="11" fill="url(#tg)" stroke="#cfcfcf" stroke-width="1.1"/>
    <!-- eyedropper -->
    <path d="M17.4 291.6 L20.4 294.6 L12 303.4 L9 304.6 L8.6 304 L10 301 Z" stroke-width="1.1"/>
    <path d="M16.4 292.6 L19.4 295.6 L21.6 293 C22.4 291.8 20.6 290 19.4 290.8 Z" fill="#d2d2d2" stroke="none"/>
    <!-- symbol sprayer -->
    <path d="M7.6 320.6 C10.4 320.4 11.4 317.6 10.4 315 C9.6 313 11.6 311.4 13 312.8 C14.2 314 13 315.6 14.6 317 C16.4 318.6 18.4 314.6 21 316 C22.6 317 21.4 319.6 19.6 319 M12 317.4 C13.4 319.4 11 321.6 9.2 321" stroke-width="1.3"/>
    <circle cx="17.4" cy="313" r="1.1" fill="#d2d2d2" stroke="none"/>
    <!-- blend -->
    <rect x="7.4" y="330.4" width="7" height="6.4" fill="#d2d2d2" stroke="none"/>
    <circle cx="14.4" cy="335.4" r="3.6" fill="#8a8a8a" stroke="none"/><circle cx="18" cy="337.6" r="3.4" stroke-width="1"/>
    <!-- artboard -->
    <path d="M10.4 347.6 V351.4 M6.8 351.4 H12" stroke-width="1"/>
    <path d="M10.4 352.6 H17.6 L19.6 354.6 V359.4 H10.4 Z" fill="#707070" stroke-width="1"/>
    <!-- zoom -->
    <circle cx="12.6" cy="371.4" r="4.2" stroke-width="1.3"/><path d="M15.8 374.6 L20.4 379.4" stroke-width="1.8"/>
    <!-- corner triangles -->
    <g fill="#b4b4b4" stroke="none">
      <path d="M24.6 112 V114.6 H22 Z"/><path d="M24.6 131 V133.6 H22 Z"/><path d="M24.6 168.6 V171.2 H22 Z"/><path d="M24.6 187.6 V190.2 H22 Z"/>
      <path d="M24.6 206.6 V209.2 H22 Z"/><path d="M24.6 225.6 V228.2 H22 Z"/><path d="M24.6 244.6 V247.2 H22 Z"/><path d="M24.6 282.6 V285.2 H22 Z"/><path d="M24.6 377.6 V380.2 H22 Z"/>
    </g>
    <!-- default fill/stroke + swap -->
    <rect x="3.4" y="389.4" width="6" height="6" fill="#f4f4f4" stroke="none"/><rect x="6" y="392" width="6" height="6" fill="#f4f4f4" stroke="#222" stroke-width="1.4"/><rect x="4.6" y="390.6" width="4" height="4" fill="#222" stroke="none"/>
    <path d="M20.6 391 Q24.6 391 24.6 395.6 M23 394.4 L24.6 396.4 L26.2 394.4" stroke="#7a7a7a" stroke-width="1"/>
    <!-- fill ? -->
    <rect x="4.4" y="402.4" width="13.6" height="15" fill="#424242" stroke="#5a5a5a" stroke-width="1"/>
    <!-- stroke box -->
    <rect x="10" y="410.4" width="16.6" height="16.4" fill="#f4f4f4" stroke="none"/>
    <rect x="15" y="415.4" width="6.6" height="6.4" fill="#4a4a4a" stroke="#222" stroke-width="0.8"/>
    <path d="M11 425.8 L25.6 411.4" stroke="#e8202a" stroke-width="1.7"/>
    <!-- colour modes -->
    <rect x="4.4" y="431.4" width="6.4" height="7" fill="#111" stroke="none"/><rect x="6.4" y="433.4" width="2.6" height="3" fill="#444" stroke="none"/>
    <rect x="11.6" y="431.4" width="6" height="7" fill="url(#tg2)" stroke="none"/>
    <rect x="18.6" y="431.4" width="6.6" height="7" fill="#f4f4f4" stroke="none"/><path d="M19 438 L24.8 431.8" stroke="#e8202a" stroke-width="1.2"/>
    <!-- draw mode -->
    <circle cx="13.4" cy="448.6" r="3.6" stroke-width="1"/><rect x="13.6" y="448.6" width="5.4" height="5" fill="#a8a8a8" stroke="#d2d2d2" stroke-width="0.8"/>
    <!-- screen mode -->
    <rect x="7.6" y="467.4" width="9" height="7" fill="#6a6a6a" stroke-width="1"/><rect x="12" y="464.4" width="10" height="7.4" fill="#6a6a6a" stroke-width="1"/><path d="M12 466 H22" stroke-width="1.4"/>
    <!-- dots -->
    <g fill="#c4c4c4" stroke="none"><circle cx="10.6" cy="495" r="1.4"/><circle cx="14.6" cy="495" r="1.4"/><circle cx="18.6" cy="495" r="1.4"/></g>
  </g>
  <defs>
    <linearGradient id="tg" x1="0" y1="0" x2="1" y2="0"><stop offset="0" stop-color="#1e1e1e"/><stop offset="1" stop-color="#d8d8d8"/></linearGradient>
    <linearGradient id="tg2" x1="0" y1="0" x2="1" y2="0"><stop offset="0" stop-color="#f4f4f4"/><stop offset="1" stop-color="#222"/></linearGradient>
  </defs>
</svg>
<div class="t" style="left:8.6px;top:405px;font-size:9px;color:#e0e0e0">?</div>
<!-- RIGHT DOCK -->
<div id="dockbg" class="abs"></div><div id="dockfill" class="abs"></div><div id="dockicons" class="abs"></div><div id="dockwide" class="abs"></div>
<svg width="8" height="6" style="left:1027.4px;top:55.4px" viewBox="0 0 8 6"><path d="M3.4 0.8 L1.2 3 L3.4 5.2 M6.8 0.8 L4.6 3 L6.8 5.2" fill="none" stroke="#b0b0b0" stroke-width="0.9"/></svg>
<svg width="8" height="6" style="left:1131.6px;top:55.4px" viewBox="0 0 8 6"><path d="M3.4 0.8 L1.2 3 L3.4 5.2 M6.8 0.8 L4.6 3 L6.8 5.2" fill="none" stroke="#b0b0b0" stroke-width="0.9"/></svg>
<div class="abs" style="left:1041px;top:94px;width:104px;height:1.5px;background:#363636"></div>
<div class="abs" style="left:1084px;top:98px;width:14px;height:2px;border-top:1px dotted #5a5a5a;border-bottom:1px dotted #5a5a5a"></div>
<div class="abs" style="left:1041px;top:173px;width:104px;height:1.5px;background:#363636"></div>
<div class="abs" style="left:1084px;top:177px;width:14px;height:2px;border-top:1px dotted #5a5a5a;border-bottom:1px dotted #5a5a5a"></div>
<div class="abs" style="left:1041px;top:249px;width:104px;height:1.5px;background:#363636"></div>
<div class="abs" style="left:1084px;top:253px;width:14px;height:2px;border-top:1px dotted #5a5a5a;border-bottom:1px dotted #5a5a5a"></div>
<div class="abs" style="left:1084px;top:66px;width:14px;height:2px;border-top:1px dotted #5a5a5a;border-bottom:1px dotted #5a5a5a"></div>
<div class="abs" style="left:1018px;top:66px;width:12px;height:2px;border-top:1px dotted #5a5a5a;border-bottom:1px dotted #5a5a5a"></div>
<div class="abs" style="left:1011px;top:116px;width:27px;height:2px;background:#333"></div>
<div class="abs" style="left:1018px;top:120px;width:12px;height:2px;border-top:1px dotted #5a5a5a;border-bottom:1px dotted #5a5a5a"></div>
<div class="abs" style="left:1041px;top:303px;width:104px;height:1px;background:#3a3a3a"></div>
<div class="abs" style="left:1044px;top:260px;width:94px;height:17px;background:#2d2d2d"></div>
<div class="t b" style="left:1070px;top:78.1px;font-size:8.7px;color:#e6e6e6">Actions</div>
<div class="t b" style="left:1070px;top:110.6px;font-size:8.7px;color:#e6e6e6">Links</div>
<div class="t b" style="left:1070px;top:133.1px;font-size:8.7px;color:#e6e6e6">Libraries</div>
<div class="t b" style="left:1070px;top:155.1px;font-size:8.7px;color:#e6e6e6">Document Info</div>
<div class="t b" style="left:1070px;top:187.6px;font-size:8.7px;color:#e6e6e6">Variables</div>
<div class="t b" style="left:1070px;top:210.1px;font-size:8.7px;color:#e6e6e6">Appearance</div>
<div class="t b" style="left:1070px;top:232.1px;font-size:8.7px;color:#e6e6e6">Asset Export</div>
<div class="t b" style="left:1070px;top:265.1px;font-size:8.7px;color:#e6e6e6">Layers</div>
<div class="t b" style="left:1070px;top:287.1px;font-size:8.7px;color:#e6e6e6">Artboards</div>
<svg width="137" height="250" style="left:1008px;top:60px" viewBox="1008 60 137 250">
<g fill="none" stroke="#cfcfcf" stroke-width="1.2" stroke-linejoin="round" stroke-linecap="round">
<!-- palette -->
<path d="M1024.5 75.6 C1020 75.6 1016.6 78.2 1016.6 81.4 C1016.6 84.8 1019.6 87 1022.6 86.6 C1024.2 86.4 1023.6 84.2 1025.2 84 C1027.6 83.8 1031.6 84.6 1031.6 80.8 C1031.6 77.6 1028.6 75.6 1024.5 75.6 Z" fill="#d4d4d4" stroke="none"/>
<g fill="#4a4a4a" stroke="none"><circle cx="1020" cy="80" r="1.2"/><circle cx="1023.4" cy="78.2" r="1.2"/><circle cx="1027.2" cy="78.6" r="1.2"/><circle cx="1029" cy="81.4" r="1.1"/><circle cx="1020.6" cy="83.6" r="1.3"/></g>
<!-- gradient fan -->
<path d="M1018.6 96.6 V109.6 H1031 C1031 102 1026 96.6 1018.6 96.6 Z" fill="url(#dg)" stroke="#d4d4d4" stroke-width="1"/>
<!-- Actions play -->
<path d="M1052 76.6 L1061 81.6 L1052 86.6 Z" fill="#cfcfcf" stroke="none"/>
<!-- Links -->
<rect x="1049" y="110.4" width="8.4" height="6" rx="3" stroke-width="1.4"/><rect x="1055" y="110.4" width="8.4" height="6" rx="3" stroke-width="1.4"/>
<!-- Libraries (CC cloud) -->
<path d="M1052.4 141.6 C1049.4 141.6 1048 139.6 1048 137.6 C1048 135.4 1049.8 133.8 1051.6 133.8 C1052.4 131.8 1054.4 130.6 1056.6 130.6 C1059.6 130.6 1061.6 132.6 1062 135 C1063.6 135.4 1064.4 136.8 1064.4 138.2 C1064.4 140 1063 141.6 1061 141.6 Z" fill="#8e8e8e" stroke="#cfcfcf" stroke-width="1"/>
<circle cx="1054" cy="137.4" r="2.4" stroke-width="0.9"/><circle cx="1058.6" cy="137.2" r="2.8" stroke-width="0.9"/>
<!-- Document info -->
<path d="M1050.6 151.6 H1057.6 L1061 155 V165.6 H1050.6 Z" fill="#cfcfcf" stroke="none"/><path d="M1057.6 151.6 V155 H1061" stroke="#4a4a4a" stroke-width="0.8"/>
<circle cx="1055.8" cy="160.4" r="2.9" fill="#4a4a4a" stroke="none"/><path d="M1055.8 159.8 V162" stroke="#cfcfcf" stroke-width="1"/><circle cx="1055.8" cy="158.6" r="0.6" fill="#cfcfcf" stroke="none"/>
<!-- Variables gears -->
<circle cx="1053" cy="193.4" r="4.2" stroke-width="2" stroke-dasharray="1.65 1.65" stroke-linecap="butt"/><circle cx="1053" cy="193.4" r="2.9" stroke-width="1.7"/>
<circle cx="1060.6" cy="186" r="2.9" stroke-width="1.6" stroke-dasharray="1.14 1.14" stroke-linecap="butt"/><circle cx="1060.6" cy="186" r="1.9" stroke-width="1.3"/>
<!-- Appearance -->
<circle cx="1055.6" cy="213.6" r="6.4" stroke-width="1" stroke-dasharray="1 1.2" stroke="#b8b8b8" stroke-linecap="butt"/><circle cx="1055.6" cy="213.6" r="4.7" fill="#d8d8d8" stroke="none"/>
<!-- Asset export -->
<path d="M1054 229.4 H1049.6 V241.4 H1061.6 V237" stroke-width="1.3"/><path d="M1054.6 236.4 L1062 229 M1057.4 228.6 H1062.4 V233.6" stroke-width="1.3"/>
<!-- Layers -->
<path d="M1055.6 262.6 L1062.4 266 L1055.6 269.4 L1048.8 266 Z" fill="#e0e0e0" stroke="none"/><path d="M1049 269.6 L1055.6 273 L1062.2 269.6" stroke="#e0e0e0" stroke-width="1.3"/>
<!-- Artboards -->
<rect x="1049" y="283.6" width="8.4" height="8.4" stroke-width="1.1"/><rect x="1053" y="288" width="8.6" height="8" fill="#4a4a4a" stroke-width="1.1"/>
</g>
<defs><linearGradient id="dg" x1="0" y1="0" x2="1" y2="0.3"><stop offset="0" stop-color="#1e1e1e"/><stop offset="1" stop-color="#e4e4e4"/></linearGradient></defs>
</svg>
<!-- LAYERS PANEL -->
<div class="abs" style="left:665px;top:649px;width:375px;height:7px;background:#3e3e3e"></div><div class="abs" style="left:680px;top:655.6px;width:465px;height:7px;background:#0a0a0a"></div>
<div class="abs" id="layers" style="left:665px;top:123px;width:374px;height:526px;background:#4a4a4a;border:2px solid #2c2c2c;border-right-width:1px;box-shadow:0 0 3px rgba(0,0,0,.5)"></div>
<div class="abs" style="left:667px;top:125px;width:371px;height:23px;background:#3a3a3a"></div>
<div class="abs" style="left:667px;top:125px;width:39.5px;height:23px;background:#4a4a4a"></div>
<div class="abs" style="left:706.5px;top:125px;width:55px;height:23px;background:#404040"></div>
<div class="t b" style="left:673px;top:132.5px;font-size:8.3px;color:#ececec">Layers</div>
<div class="t b" style="left:714px;top:132.5px;font-size:8.3px;color:#a8a8a8">Artboards</div>
<svg width="40" height="12" style="left:1004px;top:131px" viewBox="0 0 40 12"><path d="M2 2.6 L5 6 L2 9.4 M6 2.6 L9 6 L6 9.4" fill="none" stroke="#b8b8b8" stroke-width="1"/><path d="M16.5 1.6 V10.4" stroke="#8a8a8a" stroke-width="1"/><path d="M22 3 H30 M22 6 H30 M22 9 H30" stroke="#c4c4c4" stroke-width="1.1"/></svg>
<div class="abs" style="left:667px;top:152.3px;width:368px;height:1px;background:#3c3c3c"></div>
<div class="abs" style="left:667px;top:169.0px;width:368px;height:1px;background:#3c3c3c"></div>
<div class="abs" style="left:705.2px;top:153.5px;width:2.6px;height:15.3px;background:#3d67dd"></div>
<svg width="10" height="7" style="left:673.6px;top:157.2px" viewBox="0 0 10 7"><path d="M0.5 3.5 C2 1.2 3.6 0.6 5 0.6 C6.4 0.6 8 1.2 9.5 3.5 C8 5.8 6.4 6.4 5 6.4 C3.6 6.4 2 5.8 0.5 3.5 Z" fill="#6a6a6a" stroke="#cdcdcd" stroke-width="1"/><circle cx="5" cy="3.5" r="1.9" fill="#d6d6d6"/><circle cx="5" cy="3.5" r="0.8" fill="#4a4a4a"/></svg>
<svg width="8" height="6" style="left:713.4px;top:157.7px" viewBox="0 0 8 6"><path d="M1 1.2 L4 4.4 L7 1.2" fill="none" stroke="#d4d4d4" stroke-width="1.1"/></svg>
<div class="abs" style="left:728.5px;top:153.9px;width:13.6px;height:13.6px;background:#fbfbfb;border:1px solid #2e2e2e;overflow:hidden"></div>
<div class="t" style="left:746.8px;top:157.2px;font-size:8.9px;color:#dadada">Level 2</div>
<div class="abs" style="left:1010.6px;top:157.3px;width:6.8px;height:6.8px;border:1px solid #d0d0d0;border-radius:50%"></div>
<div class="abs" style="left:1022.6px;top:158.3px;width:4.6px;height:4.6px;background:#3d67dd;border:0.6px solid #b8c8f4"></div>
<svg width="6" height="6" style="left:1029px;top:153.3px" viewBox="0 0 6 6"><path d="M0.5 0.5 H5.5 V5.5 Z" fill="#d8d8d8"/></svg>
<div class="abs" style="left:667px;top:185.7px;width:368px;height:1px;background:#3c3c3c"></div>
<div class="abs" style="left:705.2px;top:170.2px;width:2.6px;height:15.3px;background:#3d67dd"></div>
<svg width="6" height="8" style="left:731.6px;top:173.4px" viewBox="0 0 6 8"><path d="M1.2 1 L4.4 4 L1.2 7" fill="none" stroke="#d4d4d4" stroke-width="1.1"/></svg>
<div class="abs" style="left:746.8px;top:170.6px;width:13.6px;height:13.6px;background:#fbfbfb;border:1px solid #2e2e2e;overflow:hidden"></div>
<div class="t" style="left:764.6px;top:173.9px;font-size:8.9px;color:#dadada">Side lables</div>
<div class="abs" style="left:1010.6px;top:174.0px;width:6.8px;height:6.8px;border:1px solid #d0d0d0;border-radius:50%"></div>
<div class="abs" style="left:667px;top:202.5px;width:368px;height:1px;background:#3c3c3c"></div>
<div class="abs" style="left:705.2px;top:186.9px;width:2.6px;height:15.3px;background:#3d67dd"></div>
<svg width="10" height="7" style="left:673.6px;top:190.6px" viewBox="0 0 10 7"><path d="M0.5 3.5 C2 1.2 3.6 0.6 5 0.6 C6.4 0.6 8 1.2 9.5 3.5 C8 5.8 6.4 6.4 5 6.4 C3.6 6.4 2 5.8 0.5 3.5 Z" fill="#6a6a6a" stroke="#cdcdcd" stroke-width="1"/><circle cx="5" cy="3.5" r="1.9" fill="#d6d6d6"/><circle cx="5" cy="3.5" r="0.8" fill="#4a4a4a"/></svg>
<svg width="6" height="8" style="left:731.6px;top:190.1px" viewBox="0 0 6 8"><path d="M1.2 1 L4.4 4 L1.2 7" fill="none" stroke="#d4d4d4" stroke-width="1.1"/></svg>
<div class="abs" style="left:746.8px;top:187.3px;width:13.6px;height:13.6px;background:#fbfbfb;border:1px solid #2e2e2e;overflow:hidden"></div>
<div class="t" style="left:764.6px;top:190.6px;font-size:8.9px;color:#dadada">Outline</div>
<div class="abs" style="left:1010.6px;top:190.7px;width:6.8px;height:6.8px;border:1px solid #d0d0d0;border-radius:50%"></div>
<div class="abs" style="left:667px;top:219.2px;width:368px;height:1px;background:#3c3c3c"></div>
<div class="abs" style="left:705.2px;top:203.7px;width:2.6px;height:15.3px;background:#3d67dd"></div>
<svg width="6" height="8" style="left:731.6px;top:206.8px" viewBox="0 0 6 8"><path d="M1.2 1 L4.4 4 L1.2 7" fill="none" stroke="#d4d4d4" stroke-width="1.1"/></svg>
<div class="abs" style="left:746.8px;top:204.0px;width:13.6px;height:13.6px;background:#fbfbfb;border:1px solid #2e2e2e;overflow:hidden"><svg width="13" height="13" viewBox="0 0 13 13" style="left:0;top:0"><path d="M2 5 L6 2.4 L11 6 L8 10 L3 9 Z" fill="#e07a5a"/><path d="M6 4 L10 6.4 L8 9 L4.4 8 Z" fill="#8cc86a"/><path d="M3 9 L8 10 L9 8 L4 7 Z" fill="#f0d060"/></svg></div>
<div class="t" style="left:764.6px;top:207.3px;font-size:8.9px;color:#dadada">Zones</div>
<div class="abs" style="left:1010.6px;top:207.4px;width:6.8px;height:6.8px;border:1px solid #d0d0d0;border-radius:50%"></div>
<div class="abs" style="left:667px;top:235.9px;width:368px;height:1px;background:#3c3c3c"></div>
<div class="abs" style="left:705.2px;top:220.4px;width:2.6px;height:15.3px;background:#3d67dd"></div>
<svg width="10" height="7" style="left:673.6px;top:224.0px" viewBox="0 0 10 7"><path d="M0.5 3.5 C2 1.2 3.6 0.6 5 0.6 C6.4 0.6 8 1.2 9.5 3.5 C8 5.8 6.4 6.4 5 6.4 C3.6 6.4 2 5.8 0.5 3.5 Z" fill="#6a6a6a" stroke="#cdcdcd" stroke-width="1"/><circle cx="5" cy="3.5" r="1.9" fill="#d6d6d6"/><circle cx="5" cy="3.5" r="0.8" fill="#4a4a4a"/></svg>
<svg width="6" height="8" style="left:731.6px;top:223.5px" viewBox="0 0 6 8"><path d="M1.2 1 L4.4 4 L1.2 7" fill="none" stroke="#d4d4d4" stroke-width="1.1"/></svg>
<div class="abs" style="left:746.8px;top:220.7px;width:13.6px;height:13.6px;background:#fbfbfb;border:1px solid #2e2e2e;overflow:hidden"></div>
<div class="t" style="left:764.6px;top:224.0px;font-size:8.9px;color:#dadada">Skeleton</div>
<div class="abs" style="left:1010.6px;top:224.1px;width:6.8px;height:6.8px;border:1px solid #d0d0d0;border-radius:50%"></div>
<div class="abs" style="left:667px;top:236.4px;width:368px;height:16.7px;background:#3e5374"></div>
<div class="abs" style="left:667px;top:252.6px;width:368px;height:1px;background:#3c3c3c"></div>
<div class="abs" style="left:705.2px;top:237.1px;width:2.6px;height:15.3px;background:#3d67dd"></div>
<svg width="10" height="7" style="left:673.6px;top:240.8px" viewBox="0 0 10 7"><path d="M0.5 3.5 C2 1.2 3.6 0.6 5 0.6 C6.4 0.6 8 1.2 9.5 3.5 C8 5.8 6.4 6.4 5 6.4 C3.6 6.4 2 5.8 0.5 3.5 Z" fill="#6a6a6a" stroke="#cdcdcd" stroke-width="1"/><circle cx="5" cy="3.5" r="1.9" fill="#d6d6d6"/><circle cx="5" cy="3.5" r="0.8" fill="#4a4a4a"/></svg>
<svg width="6" height="8" style="left:731.6px;top:240.3px" viewBox="0 0 6 8"><path d="M1.2 1 L4.4 4 L1.2 7" fill="none" stroke="#d4d4d4" stroke-width="1.1"/></svg>
<div class="abs" style="left:746.8px;top:237.5px;width:13.6px;height:13.6px;background:#fbfbfb;border:1px solid #2e2e2e;overflow:hidden"><svg width="13" height="13" viewBox="0 0 13 13" style="left:0;top:0"><g fill="#8fb6a0"><rect x="2" y="3" width="1.4" height="1.4"/><rect x="7" y="2" width="1.2" height="1.2"/><rect x="4" y="7" width="1.4" height="1.2"/><rect x="9" y="8.6" width="1.4" height="1.2"/><rect x="3" y="10" width="1" height="1"/><rect x="8" y="5" width="1" height="1"/></g></svg></div>
<div class="t" style="left:764.6px;top:240.8px;font-size:8.9px;color:#dadada">bookings</div>
<div class="abs" style="left:1010.6px;top:240.9px;width:6.8px;height:6.8px;border:1px solid #d0d0d0;border-radius:50%"></div>
<div class="abs" style="left:667px;top:269.3px;width:368px;height:1px;background:#3c3c3c"></div>
<div class="abs" style="left:705.2px;top:253.8px;width:2.6px;height:15.3px;background:#3d67dd"></div>
<svg width="6" height="8" style="left:731.6px;top:257.0px" viewBox="0 0 6 8"><path d="M1.2 1 L4.4 4 L1.2 7" fill="none" stroke="#d4d4d4" stroke-width="1.1"/></svg>
<div class="abs" style="left:746.8px;top:254.2px;width:13.6px;height:13.6px;background:#fbfbfb;border:1px solid #2e2e2e;overflow:hidden"></div>
<div class="t" style="left:764.6px;top:257.5px;font-size:8.9px;color:#dadada">tags</div>
<div class="abs" style="left:1010.6px;top:257.6px;width:6.8px;height:6.8px;border:1px solid #d0d0d0;border-radius:50%"></div>
<div class="abs" style="left:667px;top:286.1px;width:368px;height:1px;background:#3c3c3c"></div>
<div class="abs" style="left:705.2px;top:270.5px;width:2.6px;height:15.3px;background:#3d67dd"></div>
<svg width="6" height="8" style="left:731.6px;top:273.7px" viewBox="0 0 6 8"><path d="M1.2 1 L4.4 4 L1.2 7" fill="none" stroke="#d4d4d4" stroke-width="1.1"/></svg>
<div class="abs" style="left:746.8px;top:270.9px;width:13.6px;height:13.6px;background:#fbfbfb;border:1px solid #2e2e2e;overflow:hidden"><svg width="13" height="13" viewBox="0 0 13 13" style="left:0;top:0"><path d="M6 3 L4 9 H9 Z" fill="none" stroke="#bbb" stroke-width="0.6"/></svg></div>
<div class="t" style="left:764.6px;top:274.2px;font-size:8.9px;color:#dadada">Signage</div>
<div class="abs" style="left:1010.6px;top:274.3px;width:6.8px;height:6.8px;border:1px solid #d0d0d0;border-radius:50%"></div>
<div class="abs" style="left:667px;top:302.8px;width:368px;height:1px;background:#3c3c3c"></div>
<div class="abs" style="left:705.2px;top:287.3px;width:2.6px;height:15.3px;background:#3d67dd"></div>
<svg width="6" height="8" style="left:731.6px;top:290.4px" viewBox="0 0 6 8"><path d="M1.2 1 L4.4 4 L1.2 7" fill="none" stroke="#d4d4d4" stroke-width="1.1"/></svg>
<div class="abs" style="left:746.8px;top:287.6px;width:13.6px;height:13.6px;background:#fbfbfb;border:1px solid #2e2e2e;overflow:hidden"></div>
<div class="t" style="left:764.6px;top:290.9px;font-size:8.9px;color:#dadada">area-02-closed</div>
<div class="abs" style="left:1010.6px;top:291.0px;width:6.8px;height:6.8px;border:1px solid #d0d0d0;border-radius:50%"></div>
<div class="abs" style="left:667px;top:319.5px;width:368px;height:1px;background:#3c3c3c"></div>
<div class="abs" style="left:705.2px;top:304.0px;width:2.6px;height:15.3px;background:#3d67dd"></div>
<svg width="10" height="7" style="left:673.6px;top:307.6px" viewBox="0 0 10 7"><path d="M0.5 3.5 C2 1.2 3.6 0.6 5 0.6 C6.4 0.6 8 1.2 9.5 3.5 C8 5.8 6.4 6.4 5 6.4 C3.6 6.4 2 5.8 0.5 3.5 Z" fill="#6a6a6a" stroke="#cdcdcd" stroke-width="1"/><circle cx="5" cy="3.5" r="1.9" fill="#d6d6d6"/><circle cx="5" cy="3.5" r="0.8" fill="#4a4a4a"/></svg>
<svg width="6" height="8" style="left:731.6px;top:307.1px" viewBox="0 0 6 8"><path d="M1.2 1 L4.4 4 L1.2 7" fill="none" stroke="#d4d4d4" stroke-width="1.1"/></svg>
<div class="abs" style="left:746.8px;top:304.3px;width:13.6px;height:13.6px;background:#fbfbfb;border:1px solid #2e2e2e;overflow:hidden"><svg width="13" height="13" viewBox="0 0 13 13" style="left:0;top:0"><path d="M2.4 8 L6 3 L11 7 L8 11 Z M4 4 L7 9" fill="none" stroke="#4a8a5a" stroke-width="0.8"/></svg></div>
<div class="t" style="left:764.6px;top:307.6px;font-size:8.9px;color:#dadada">plants and furniature</div>
<div class="abs" style="left:1010.6px;top:307.7px;width:6.8px;height:6.8px;border:1px solid #d0d0d0;border-radius:50%"></div>
<div class="abs" style="left:667px;top:336.2px;width:368px;height:1px;background:#3c3c3c"></div>
<div class="abs" style="left:705.2px;top:320.7px;width:2.6px;height:15.3px;background:#3d67dd"></div>
<svg width="10" height="7" style="left:673.6px;top:324.4px" viewBox="0 0 10 7"><path d="M0.5 3.5 C2 1.2 3.6 0.6 5 0.6 C6.4 0.6 8 1.2 9.5 3.5 C8 5.8 6.4 6.4 5 6.4 C3.6 6.4 2 5.8 0.5 3.5 Z" fill="#6a6a6a" stroke="#cdcdcd" stroke-width="1"/><circle cx="5" cy="3.5" r="1.9" fill="#d6d6d6"/><circle cx="5" cy="3.5" r="0.8" fill="#4a4a4a"/></svg>
<svg width="6" height="8" style="left:731.6px;top:323.9px" viewBox="0 0 6 8"><path d="M1.2 1 L4.4 4 L1.2 7" fill="none" stroke="#d4d4d4" stroke-width="1.1"/></svg>
<div class="abs" style="left:746.8px;top:321.1px;width:13.6px;height:13.6px;background:#fbfbfb;border:1px solid #2e2e2e;overflow:hidden"><svg width="13" height="13" viewBox="0 0 13 13" style="left:0;top:0"><g fill="#8fb6a0"><rect x="2" y="3" width="1.4" height="1.4"/><rect x="7" y="2" width="1.2" height="1.2"/><rect x="4" y="7" width="1.4" height="1.2"/><rect x="9" y="8.6" width="1.4" height="1.2"/><rect x="3" y="10" width="1" height="1"/><rect x="8" y="5" width="1" height="1"/></g></svg></div>
<div class="t" style="left:764.6px;top:324.4px;font-size:8.9px;color:#dadada">spaces</div>
<div class="abs" style="left:1010.6px;top:324.5px;width:6.8px;height:6.8px;border:1px solid #d0d0d0;border-radius:50%"></div>
<div class="abs" style="left:667px;top:352.9px;width:368px;height:1px;background:#3c3c3c"></div>
<div class="abs" style="left:705.2px;top:337.4px;width:2.6px;height:15.3px;background:#3d67dd"></div>
<svg width="6" height="8" style="left:731.6px;top:340.6px" viewBox="0 0 6 8"><path d="M1.2 1 L4.4 4 L1.2 7" fill="none" stroke="#d4d4d4" stroke-width="1.1"/></svg>
<div class="abs" style="left:746.8px;top:337.8px;width:13.6px;height:13.6px;background:#fbfbfb;border:1px solid #2e2e2e;overflow:hidden"><svg width="13" height="13" viewBox="0 0 13 13" style="left:0;top:0"><g fill="#8fb6a0"><rect x="2" y="3" width="1.4" height="1.4"/><rect x="7" y="2" width="1.2" height="1.2"/><rect x="4" y="7" width="1.4" height="1.2"/><rect x="9" y="8.6" width="1.4" height="1.2"/><rect x="3" y="10" width="1" height="1"/><rect x="8" y="5" width="1" height="1"/></g></svg></div>
<div class="t" style="left:764.6px;top:341.1px;font-size:8.9px;color:#dadada">blanks</div>
<div class="abs" style="left:1010.6px;top:341.2px;width:6.8px;height:6.8px;border:1px solid #d0d0d0;border-radius:50%"></div>
<div class="abs" style="left:667px;top:369.7px;width:368px;height:1px;background:#3c3c3c"></div>
<div class="abs" style="left:705.2px;top:354.1px;width:2.6px;height:15.3px;background:#3d67dd"></div>
<svg width="6" height="8" style="left:731.6px;top:357.3px" viewBox="0 0 6 8"><path d="M1.2 1 L4.4 4 L1.2 7" fill="none" stroke="#d4d4d4" stroke-width="1.1"/></svg>
<div class="abs" style="left:746.8px;top:354.5px;width:13.6px;height:13.6px;background:#fbfbfb;border:1px solid #2e2e2e;overflow:hidden"></div>
<div class="t" style="left:764.6px;top:357.8px;font-size:8.9px;color:#dadada">architectural floor plan</div>
<div class="abs" style="left:1010.6px;top:357.9px;width:6.8px;height:6.8px;border:1px solid #d0d0d0;border-radius:50%"></div>
<div class="abs" style="left:667px;top:386.4px;width:368px;height:1px;background:#3c3c3c"></div>
<div class="abs" style="left:705.2px;top:370.9px;width:2.6px;height:15.3px;background:#3d67dd"></div>
<svg width="10" height="7" style="left:673.6px;top:374.5px" viewBox="0 0 10 7"><path d="M0.5 3.5 C2 1.2 3.6 0.6 5 0.6 C6.4 0.6 8 1.2 9.5 3.5 C8 5.8 6.4 6.4 5 6.4 C3.6 6.4 2 5.8 0.5 3.5 Z" fill="#6a6a6a" stroke="#cdcdcd" stroke-width="1"/><circle cx="5" cy="3.5" r="1.9" fill="#d6d6d6"/><circle cx="5" cy="3.5" r="0.8" fill="#4a4a4a"/></svg>
<svg width="6" height="8" style="left:731.6px;top:374.0px" viewBox="0 0 6 8"><path d="M1.2 1 L4.4 4 L1.2 7" fill="none" stroke="#d4d4d4" stroke-width="1.1"/></svg>
<div class="abs" style="left:746.8px;top:371.2px;width:13.6px;height:13.6px;background:#cfe0ee;border:1px solid #2e2e2e;overflow:hidden"></div>
<div class="t" style="left:764.6px;top:374.5px;font-size:8.9px;color:#dadada">bkr</div>
<div class="abs" style="left:1010.6px;top:374.6px;width:6.8px;height:6.8px;border:1px solid #d0d0d0;border-radius:50%"></div>
<div class="abs" style="left:1008.8px;top:372.8px;width:10.4px;height:10.4px;border:1px solid #d0d0d0;border-radius:50%"></div>
<div class="abs" style="left:1022px;top:375.0px;width:6px;height:6px;background:#3d67dd;border:1px solid #b8c8f4"></div>
<div class="abs" style="left:667px;top:403.1px;width:368px;height:1px;background:#3c3c3c"></div>
<div class="abs" style="left:705.2px;top:387.6px;width:2.6px;height:15.3px;background:#3d67dd"></div>
<div class="abs" style="left:746.8px;top:387.9px;width:13.6px;height:13.6px;background:#fbfbfb;border:1px solid #2e2e2e;overflow:hidden"></div>
<div class="t" style="left:764.6px;top:391.2px;font-size:8.9px;color:#dadada">&lt;Group&gt;</div>
<div class="abs" style="left:1010.6px;top:391.3px;width:6.8px;height:6.8px;border:1px solid #d0d0d0;border-radius:50%"></div>
<div class="abs" style="left:667px;top:632px;width:371px;height:1px;background:#404040"></div>
<div class="t" style="left:670.6px;top:637px;font-size:8.5px;color:#d8d8d8">1 Layer</div>
<svg width="120" height="14" style="left:900px;top:633.5px" viewBox="900 633.5 120 14">
<g fill="none" stroke="#cfcfcf" stroke-width="1.1" stroke-linejoin="round" stroke-linecap="round">
<path d="M908 636.4 H904.4 V645 H913 V641.4"/><path d="M908.6 641 L913.6 636 M910.4 635.6 H914 V639.2"/>
<circle cx="931" cy="639.4" r="3.2"/><path d="M928.6 642 L925.6 645.4" stroke-width="1.5"/>
<rect x="945.4" y="636.4" width="6.4" height="6.4"/><rect x="948" y="639" width="6" height="6" fill="#cfcfcf"/><rect x="947.2" y="638.2" width="3" height="3" fill="#cfcfcf" stroke="none"/>
<g stroke="#6e6e6e"><path d="M966 637 H969 V640.6"/><rect x="969.4" y="638" width="5.6" height="6" fill="#6e6e6e"/></g>
<path d="M987.6 636.4 H994.6 V645.4 H990 V641 H987.6 Z" fill="#cfcfcf"/><path d="M987.6 641.6 L989.6 645" stroke-width="0.8"/>
<path d="M1007 638 H1015 M1009.6 638 V636.4 H1012.4 V638 M1008 638.6 L1008.4 645.6 H1013.6 L1014 638.6 Z" /><path d="M1009.8 640 V644.4 M1011 640 V644.4 M1012.2 640 V644.4" stroke-width="0.7"/>
</g></svg>
<div class="abs" style="left:1142px;top:0;width:3px;height:658px;background:#3a3a3a"></div>
</div></body></html>
